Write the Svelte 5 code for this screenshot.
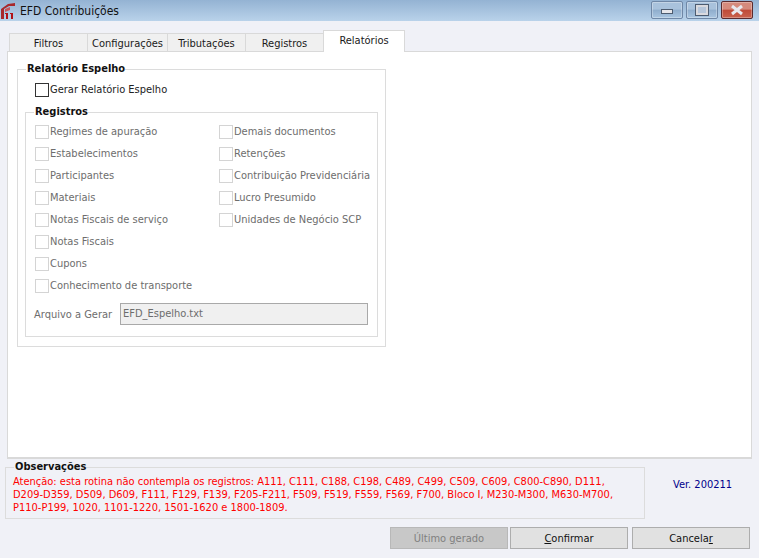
<script>
  const tabs = ['Filtros', 'Configurações', 'Tributações', 'Registros', 'Relatórios'];
  const col1 = ['Regimes de apuração', 'Estabelecimentos', 'Participantes', 'Materiais', 'Notas Fiscais de serviço', 'Notas Fiscais', 'Cupons', 'Conhecimento de transporte'];
  const col2 = ['Demais documentos', 'Retenções', 'Contribuição Previdenciária', 'Lucro Presumido', 'Unidades de Negócio SCP'];
</script>

<div class="window">
  <header class="titlebar">
    <svg class="logo" width="16" height="16" viewBox="0 0 16 16">
      <path d="M0 6 L7 1 L14 0 L14 3 L8 3 L3 6 L3 16 L0 16 Z" fill="#a8282c" />
      <path d="M4 6 L9 4 L9 7 L4 9 Z" fill="#c8555a" />
      <path d="M5 10 H7 V16 H5 Z M10 10 H12 V16 H10 Z" fill="#b01218" />
      <path d="M4 11 L5 10 M9 11 L10 10" stroke="#b01218" fill="none" />
    </svg>
    <span class="title">EFD Contribuições</span>
    <div class="controls">
      <div class="ctl">
        <span class="min"></span>
      </div>
      <div class="ctl">
        <span class="max"></span>
      </div>
      <div class="ctl close">
        <svg width="16" height="12" viewBox="0 0 16 12">
          <path d="M3 2 L13 10 M13 2 L3 10" stroke="#e8e8ee" stroke-width="3" />
        </svg>
      </div>
    </div>
  </header>

  <div class="tabs">
    {#each tabs as t, i}
      <div class="tab t{i}" class:active={i === 4}>{t}</div>
    {/each}
  </div>

  <main class="panel">
    <section class="group outer">
      <h2 class="legend">Relatório Espelho</h2>
      <label class="check main-check"><span class="box dark"></span>Gerar Relatório Espelho</label>

      <section class="group inner">
        <h2 class="legend">Registros</h2>
        <div class="columns">
          <div class="col first">
            {#each col1 as c}
              <div class="check off"><span class="box"></span>{c}</div>
            {/each}
          </div>
          <div class="col">
            {#each col2 as c}
              <div class="check off"><span class="box"></span>{c}</div>
            {/each}
          </div>
        </div>
        <div class="file-row">
          <span class="file-label">Arquivo a Gerar</span>
          <div class="input">EFD_Espelho.txt</div>
        </div>
      </section>
    </section>
  </main>

  <div class="notes-row">
    <section class="group notes">
      <h2 class="legend">Observações</h2>
      <p>Atenção: esta rotina não contempla os registros: A111, C111, C188, C198, C489, C499, C509, C609, C800-C890, D111,<br />
      D209-D359, D509, D609, F111, F129, F139, F205-F211, F509, F519, F559, F569, F700, Bloco I, M230-M300, M630-M700,<br />
      P110-P199, 1020, 1101-1220, 1501-1620 e 1800-1809.</p>
    </section>
    <div class="version">Ver. 200211</div>
  </div>

  <footer class="actions">
    <div class="btn disabled">Último <u>g</u>erado</div>
    <div class="btn"><u>C</u>onfirmar</div>
    <div class="btn cancel">Cancela<u>r</u></div>
  </footer>
</div>

<style>
  :global(body) {
    margin: 0;
    background: #f0f1f7;
  }

  .window {
    width: 759px;
    height: 558px;
    display: flex;
    flex-direction: column;
    overflow: hidden;
    background: #f0f1f7;
    font-family: "DejaVu Sans Condensed", "DejaVu Sans", sans-serif;
    font-size: 11px;
    color: #1a1a1a;
  }

  .titlebar {
    height: 21px;
    flex: none;
    display: flex;
    align-items: center;
    padding-left: 1px;
    background: linear-gradient(#94b3d3, #b9d2ea);
  }

  .logo {
    margin-right: 3px;
  }

  .title {
    font-size: 12px;
    color: #111;
  }

  .controls {
    margin-left: auto;
    margin-right: 6px;
    margin-top: -1px;
    display: flex;
    gap: 3px;
  }

  .ctl {
    width: 30px;
    height: 16px;
    border: 1px solid #6f87a6;
    border-radius: 2px;
    display: flex;
    align-items: center;
    justify-content: center;
    background: linear-gradient(#a9c2dc 45%, #8fadcc 50%, #a9c5e0);
    box-shadow: inset 0 0 0 1px rgba(255, 255, 255, 0.3);
  }

  .min {
    width: 10px;
    height: 3px;
    margin-top: 2px;
    background: #e6e6ea;
    border: 1px solid #4d5c70;
  }

  .max {
    width: 8px;
    height: 6px;
    background: #b6c6da;
    border: 2px solid #d9d9de;
    outline: 1px solid #4d5c70;
  }

  .close {
    width: 30px;
    border-color: #5a2a2e;
    background: linear-gradient(#d58a7c 45%, #bf4a38 50%, #c9624e);
  }

  .tabs {
    height: 31px;
    flex: none;
    display: flex;
    align-items: flex-end;
    padding-left: 9px;
    box-sizing: border-box;
    position: relative;
    z-index: 1;
    margin-bottom: -1px;
  }

  .tab {
    height: 19px;
    box-sizing: border-box;
    border: 1px solid #d9d9d9;
    border-right: none;
    border-bottom: 1px solid #d9d9d9;
    background: #f0f0f0;
    display: flex;
    align-items: center;
    justify-content: center;
    padding-top: 1px;
  }

  .t0 { width: 78px; }
  .t1 { width: 80px; }
  .t2 { width: 78px; }
  .t3 { width: 78px; }

  .tab.active {
    width: 82px;
    height: 22px;
    background: #fff;
    border-right: 1px solid #d9d9d9;
    border-bottom: none;
    padding-top: 0;
    padding-bottom: 2px;
  }

  .panel {
    height: 408px;
    flex: none;
    margin: 0 7px;
    box-sizing: border-box;
    background: #fff;
    border: 1px solid #d9d9d9;
    border-width: 1px 1px 2px 1px;
    padding: 17px 9px 0;
  }

  .group {
    border: 1px solid #dcdcdc;
    position: relative;
    box-sizing: border-box;
  }

  .legend {
    position: absolute;
    top: -8px;
    left: 8px;
    margin: 0;
    padding: 0 0 0 1px;
    font-size: 11px;
    line-height: 14px;
    font-weight: bold;
    color: #111;
    background: #fff;
  }

  .outer {
    width: 369px;
    height: 278px;
    padding: 13px 7px 0;
  }

  .check {
    display: flex;
    align-items: center;
    height: 14px;
    line-height: 14px;
  }

  .main-check {
    margin-left: 10px;
    color: #222;
  }

  .box {
    width: 12px;
    height: 12px;
    border: 1px solid #d4d4d4;
    margin-right: 1px;
    flex: none;
    background: #fff;
  }

  .box.dark {
    border-color: #333;
  }

  .inner {
    margin-top: 15px;
    width: 353px;
    height: 225px;
    padding-top: 12px;
  }

  .columns {
    display: flex;
    padding-left: 9px;
  }

  .col {
    display: flex;
    flex-direction: column;
    gap: 8px;
  }

  .col.first {
    width: 184px;
  }

  .off {
    color: #6d6d6d;
  }

  .file-row {
    display: flex;
    align-items: center;
    margin-top: 10px;
    padding-left: 8px;
  }

  .file-label {
    width: 86px;
    color: #6d6d6d;
  }

  .input {
    width: 248px;
    height: 22px;
    box-sizing: border-box;
    border: 1px solid #a9a9a9;
    background: #f0f0f0;
    color: #6d6d6d;
    line-height: 20px;
    padding-left: 2px;
  }

  .notes-row {
    display: flex;
    margin-top: 8px;
    height: 52px;
    flex: none;
  }

  .notes {
    width: 640px;
    margin-left: 5px;
    height: 52px;
    padding: 7px 7px 0;
  }

  .notes .legend {
    left: 8px;
    background: #f0f1f7;
  }

  .notes p {
    margin: 0;
    color: #f00;
    line-height: 13px;
    white-space: nowrap;
  }

  .version {
    margin: 11px 0 0 28px;
    color: #00008b;
    line-height: 13px;
  }

  .actions {
    display: flex;
    margin: 8px 0 0 390px;
    gap: 2px;
  }

  .btn {
    width: 118px;
    height: 22px;
    box-sizing: border-box;
    border: 1px solid #adadad;
    background: #e1e1e1;
    color: #111;
    display: flex;
    align-items: center;
    justify-content: center;
    white-space: pre;
  }

  .btn.disabled {
    background: #c8c8c8;
    border-color: #b8b8b8;
    color: #808080;
  }

  .btn.cancel {
    margin-left: 2px;
  }
</style>
